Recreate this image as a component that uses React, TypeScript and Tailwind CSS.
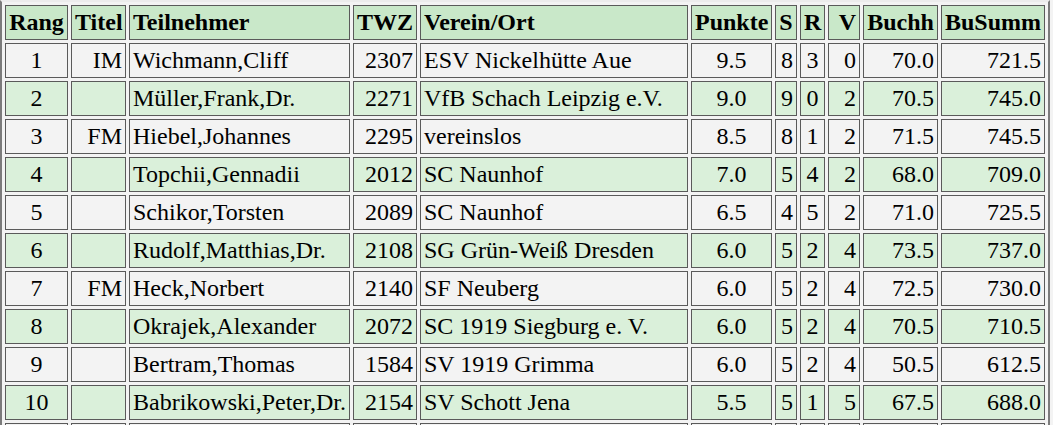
import React from "react";

type Row = [string, string, string, string, string, string, string, string, string, string, string];

const rows: Row[] = [
  ["1", "IM", "Wichmann,Cliff", "2307", "ESV Nickelhütte Aue", "9.5", "8", "3", "0", "70.0", "721.5"],
  ["2", "", "Müller,Frank,Dr.", "2271", "VfB Schach Leipzig e.V.", "9.0", "9", "0", "2", "70.5", "745.0"],
  ["3", "FM", "Hiebel,Johannes", "2295", "vereinslos", "8.5", "8", "1", "2", "71.5", "745.5"],
  ["4", "", "Topchii,Gennadii", "2012", "SC Naunhof", "7.0", "5", "4", "2", "68.0", "709.0"],
  ["5", "", "Schikor,Torsten", "2089", "SC Naunhof", "6.5", "4", "5", "2", "71.0", "725.5"],
  ["6", "", "Rudolf,Matthias,Dr.", "2108", "SG Grün-Weiß Dresden", "6.0", "5", "2", "4", "73.5", "737.0"],
  ["7", "FM", "Heck,Norbert", "2140", "SF Neuberg", "6.0", "5", "2", "4", "72.5", "730.0"],
  ["8", "", "Okrajek,Alexander", "2072", "SC 1919 Siegburg e. V.", "6.0", "5", "2", "4", "70.5", "710.5"],
  ["9", "", "Bertram,Thomas", "1584", "SV 1919 Grimma", "6.0", "5", "2", "4", "50.5", "612.5"],
  ["10", "", "Babrikowski,Peter,Dr.", "2154", "SV Schott Jena", "5.5", "5", "1", "5", "67.5", "688.0"],
  ["", "", "", "", "", "", "", "", "", "", ""],
];

const headers = ["Rang", "Titel", "Teilnehmer", "TWZ", "Verein/Ort", "Punkte", "S", "R", "V", "Buchh", "BuSumm"];
const widths = [
  "w-[63px]",
  "w-[55px]",
  "w-[221px]",
  "w-[64px]",
  "w-[268px]",
  "w-[81px]",
  "w-[22px]",
  "w-[25px]",
  "w-[32px]",
  "w-[75px]",
  "w-[104px]",
];
const aligns = [
  "text-center",
  "text-right",
  "text-left",
  "text-right",
  "text-left",
  "text-center",
  "text-right",
  "text-center",
  "text-right",
  "text-right",
  "text-right",
];
const headAligns = [
  "text-center",
  "text-center",
  "text-left",
  "text-center",
  "text-left",
  "text-center",
  "text-center",
  "text-center",
  "text-right",
  "text-center",
  "text-center",
];

export default function App() {
  return (
    <div
      className="min-h-screen bg-[#f3f3f3] text-black"
      style={{ fontFamily: '"Liberation Serif", "Times New Roman", serif' }}
    >
      <table className="table-fixed w-[1050px] border-separate border-spacing-[3px] border-2 border-[#7b7b7b] border-t-[#ececec] text-[24px] leading-[27px]">
        <thead>
          <tr>
            {headers.map((h, i) => (
              <th
                key={h}
                className={`${widths[i]} ${headAligns[i]} h-[35px] px-[3px] py-0 align-middle font-bold bg-[#c9e8c9] border border-[#5a5a5a] whitespace-nowrap overflow-hidden`}
              >
                {h}
              </th>
            ))}
          </tr>
        </thead>
        <tbody>
          {rows.map((r, ri) => (
            <tr key={ri}>
              {r.map((c, ci) => (
                <td
                  key={ci}
                  className={`${aligns[ci]} h-[35px] px-[3px] py-0 align-middle border border-[#5a5a5a] whitespace-nowrap overflow-hidden ${
                    ri % 2 === 0 ? "bg-[#f3f3f3]" : "bg-[#daf0da]"
                  }`}
                >
                  {c}
                </td>
              ))}
            </tr>
          ))}
        </tbody>
      </table>
    </div>
  );
}
